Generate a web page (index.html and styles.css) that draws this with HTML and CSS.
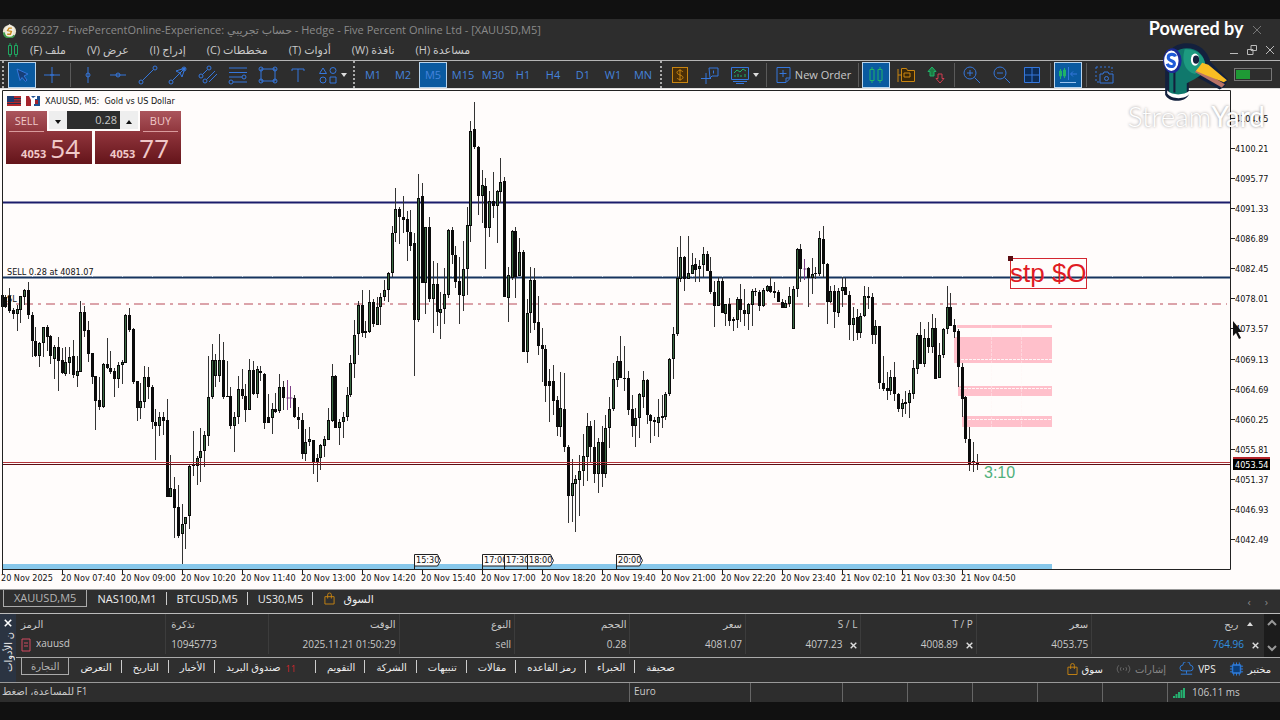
FILE: index.html
```html
<!DOCTYPE html>
<html lang="ar">
<head>
    <meta charset="UTF-8">
    <meta name="viewport" content="width=device-width, initial-scale=1.0">
    <title>XAUUSD,M5</title>
    <link rel="stylesheet" href="styles.css">
</head>
<body>
    <header>
        <div class="title-bar">
            <svg class="app-logo" viewBox="0 0 16 16"><circle cx="8" cy="9" r="7" fill="#e9e4d0"/><path d="M2 10a6 6 0 0 0 11 3" fill="none" stroke="#3f9a4c" stroke-width="2"/><path d="M8 1l5 4-2 9H5L3 6z" fill="#f3efe2"/><path d="M10.500 5.500H7.500L6 8l4 1-1 3H5.500" fill="none" stroke="#c98a1c" stroke-width="1.500"/></svg>
            <h1 class="window-title">669227 - FivePercentOnline-Experience: حساب تجريبي - Hedge - Five Percent Online Ltd - [XAUUSD,M5]</h1>
            <button class="close-btn" aria-label="Close"><svg viewBox="0 0 10 10"><path d="M1 1l8 8M9 1l-8 8"/></svg></button>
        </div>
        <nav class="menu-bar">
            <svg class="menu-icon" viewBox="0 0 12 14"><path d="M3 0v2M3 12v2M9 0v2M9 12v2M1.500 2.500h3v9h-3zM7.500 2.500h3v9h-3z"/></svg>
            <a href="#" dir="rtl">ملف (F)</a>
            <a href="#" dir="rtl">عرض (V)</a>
            <a href="#" dir="rtl">إدراج (I)</a>
            <a href="#" dir="rtl">مخططات (C)</a>
            <a href="#" dir="rtl">أدوات (T)</a>
            <a href="#" dir="rtl">نافذة (W)</a>
            <a href="#" dir="rtl">مساعدة (H)</a>
            <div class="window-btns">
                <button aria-label="Minimize"><svg viewBox="0 0 10 10"><path d="M1 8.500h8"/></svg></button>
                <button aria-label="Restore"><svg viewBox="0 0 10 10"><path d="M4 .5h5.500v5H4zM.5 4.500H6v5H.5z"/></svg></button>
                <button aria-label="Close chart"><svg viewBox="0 0 10 10"><path d="M1 1l8 8M9 1l-8 8"/></svg></button>
            </div>
        </nav>
        <div class="toolbar">
            <span class="handle"></span>
            <button class="tool active" aria-label="Cursor"><svg viewBox="0 0 20 20"><path d="M5 4l11 5-4 2 3 4-1.500 1.500-3.500-4-2 3z" fill="#173f78"/></svg></button>
            <button class="tool" aria-label="Crosshair"><svg viewBox="0 0 20 20"><path d="M10 2v16M2 10h16M8 10h4"/></svg></button>
            <span class="sep"></span>
            <button class="tool" aria-label="Vertical line"><svg viewBox="0 0 20 20"><path d="M10 2v16"/><circle cx="10" cy="10" r="2"/></svg></button>
            <button class="tool" aria-label="Horizontal line"><svg viewBox="0 0 20 20"><path d="M2 10h16"/><circle cx="10" cy="10" r="2"/></svg></button>
            <button class="tool" aria-label="Trend line"><svg viewBox="0 0 20 20"><path d="M4.500 15.500l11-11"/><circle cx="3" cy="17" r="2"/><circle cx="17" cy="3" r="2"/></svg></button>
            <button class="tool" aria-label="Arrow line"><svg viewBox="0 0 20 20"><path d="M4.500 15.500L17 3M8 6l9-3-3 9-2-4z"/><circle cx="3" cy="17" r="2"/><circle cx="16" cy="4" r="2"/></svg></button>
            <button class="tool" aria-label="Channel"><svg viewBox="0 0 20 20"><path d="M4.500 9.500l5-5M8.500 14.500L17 6M11 17l8-8"/><circle cx="11" cy="3" r="2"/><circle cx="3" cy="11" r="2"/><circle cx="7" cy="16" r="2"/></svg></button>
            <button class="tool" aria-label="Fibonacci"><svg viewBox="0 0 20 20"><path d="M1 3h18M1 7.500h18M1 12h13M5 17h14"/><circle cx="16" cy="12" r="2"/><circle cx="3" cy="17" r="2"/></svg></button>
            <button class="tool" aria-label="Rectangle"><svg viewBox="0 0 20 20"><path d="M3 4h14v12H3z"/><circle cx="3" cy="4" r="2"/><circle cx="17" cy="4" r="2"/><circle cx="3" cy="16" r="2"/><circle cx="17" cy="16" r="2"/></svg></button>
            <button class="tool" aria-label="Text"><svg viewBox="0 0 20 20"><path d="M4 6V4h12v2M10 4v13"/></svg></button>
            <button class="tool wide" aria-label="Shapes"><svg viewBox="0 0 20 20"><path d="M5 3l3.500 5.500h-7zM12 12h6v6h-6z"/><circle cx="15" cy="5.500" r="3"/><circle cx="5" cy="15" r="3"/></svg><i class="caret"></i></button>
            <span class="handle"></span>
            <button class="tool">M1</button>
            <button class="tool">M2</button>
            <button class="tool active">M5</button>
            <button class="tool">M15</button>
            <button class="tool">M30</button>
            <button class="tool">H1</button>
            <button class="tool">H4</button>
            <button class="tool">D1</button>
            <button class="tool">W1</button>
            <button class="tool">MN</button>
            <span class="handle"></span>
            <button class="tool gold" aria-label="Market depth"><svg viewBox="0 0 20 20"><rect x="2.500" y="2.500" width="15" height="15" fill="#4b2f06"/><path d="M13 7c-1-2-6-2-6 .5S13 10 13 12.500s-5 2.500-6 .5M10 4v12"/></svg></button>
            <button class="tool" aria-label="Data window"><svg viewBox="0 0 20 20"><path d="M6 8v11M1 13.500h10M9 3h9v8h-6l-2 2zM13.500 5.500v3"/></svg></button>
            <button class="tool wide" aria-label="Indicators"><svg viewBox="0 0 20 20"><path d="M1.500 2.500h17v12h-17zM3 16.500h14M6 18.500h8"/><path class="green" d="M4 8l3-3 3 2 3-3 3 2M5 12v-2M8 12V9M11 12v-2M15 12V9"/></svg><i class="caret"></i></button>
            <span class="sep"></span>
            <button class="tool order"><svg viewBox="0 0 20 20"><path d="M4 2.500h13v11l-4 4H4zM13 17v-4h4M10 5v7M6.500 8.500h7"/></svg>New Order</button>
            <span class="sep"></span>
            <button class="tool active" aria-label="Candles"><svg class="green" viewBox="0 0 20 20"><path d="M6 2v2M6 16v2M14 2v2M14 16v2M4 4.500h4v11H4zM12 4.500h4v11h-4z"/></svg></button>
            <button class="tool gold" aria-label="Templates"><svg viewBox="0 0 20 20"><path d="M2 4v13M2 10h3M5.500 3.500h5l1 2h7v11h-13zM8 8h6v4H8z" fill="#3a2708"/></svg></button>
            <button class="tool" aria-label="Buy and sell"><svg viewBox="0 0 20 20"><path class="green" d="M6 2l4 4.500H8V11H4V6.500H2z" fill="#1c7a42"/><path class="red" d="M14 18l-4-4.500h2V9h4v4.500h2z"/></svg></button>
            <span class="sep"></span>
            <button class="tool" aria-label="Zoom in"><svg viewBox="0 0 20 20"><circle cx="8" cy="8" r="6"/><path d="M12.500 12.500L18 18M5 8h6M8 5v6"/></svg></button>
            <button class="tool" aria-label="Zoom out"><svg viewBox="0 0 20 20"><circle cx="8" cy="8" r="6"/><path d="M12.500 12.500L18 18M5 8h6"/></svg></button>
            <button class="tool" aria-label="Tile windows"><svg viewBox="0 0 20 20"><path d="M2.500 2.500h15v15h-15zM10 2.500v15M2.500 10h15" fill="#0c2c57"/></svg></button>
            <span class="sep"></span>
            <button class="tool active" aria-label="Chart shift"><svg viewBox="0 0 20 20"><path class="green" d="M2.500 4v10M6.500 3v10M1.500 6h2v5h-2zM5.500 5h2v6h-2z"/><path d="M10.500 2v13M19 9h-6M15 6.500L12.500 9l2.500 2.500"/><path class="pale" d="M2 17.500h16"/></svg></button>
            <span class="sep"></span>
            <button class="tool" aria-label="Screenshot"><svg viewBox="0 0 20 20"><path d="M2 2h16v5M2 2v15h3" stroke-dasharray="2 2"/><path d="M6 9h3l1-2h4l1 2h4v9H6z"/><circle cx="12.500" cy="13.500" r="2"/></svg></button>
            <div class="toolbar-end">
                <button class="tool light" aria-label="Search"><svg viewBox="0 0 20 20"><circle cx="8" cy="9" r="5"/><path d="M12 13l4 4"/></svg></button>
                <button class="tool" aria-label="Updates"><svg viewBox="0 0 20 20"><path class="green" d="M11 2l4 4h-2v5H9V6H7z"/></svg></button>
                <span class="battery"><i></i></span>
            </div>
        </div>
    </header>

    <main class="chart">
        <svg id="chart" class="chart-svg" viewBox="0 89 1280 500">
            <g class="zones">
                <path d="M957 325h95v3h-95zM954 337h98v26h-98zM958 386h94v10h-94zM962 416h90v11h-90z"/>
                <path class="zone-line" d="M957 359.500h95M960 388.500h92M964 419.500h88"/>
                <path class="zone-line faint" d="M991.500 325v102M1021.500 325v102"/>
            </g>
            <rect class="session" x="2" y="564" width="1050" height="5"/>
            <path class="level" d="M2 202.500h1229"/>
            <path class="level entry" d="M2 277.500h1229"/>
            <path class="level-gap" d="M32 276.500h1199"/>
            <path class="stop" d="M2 304h1225"/>
            <g id="candles"></g>
            <path class="ask" d="M2 462.500h1229"/>
            <path class="bid" d="M2 464.500h1229"/>
            <path class="frame" d="M2.500 569V90.500H1230.500V569.500H2"/>
            <g id="axes"></g>
            <text x="7" y="275">SELL 0.28 at 4081.07</text>
            <text x="7" y="302">SL</text>
            <g class="note">
                <rect x="1010.500" y="258.500" width="76" height="30"/>
                <rect class="anchor" x="1008" y="256" width="5" height="5"/>
                <text x="1010" y="282">stp $O</text>
            </g>
            <text class="timer" x="984" y="478">3:10</text>
            <rect x="1233" y="458" width="37" height="12" fill="#000"/>
            <rect x="1233" y="457" width="37" height="2" fill="#b3242b"/>
            <text class="tag" x="1235" y="468">4053.54</text>
            <path class="pointer" d="M1233 321v15l3-3 3 6 2-1-3-6h4z"/>
        </svg>
        <div class="symbol-line">
            <svg viewBox="0 0 14 10"><path fill="#b3282d" d="M0 0h14v10H0z"/><path d="M0 2.500h14M0 5h14M0 7.500h14" stroke="#24304f"/><path fill="#1e3c72" d="M0 0h7v6H0z"/></svg>
            <svg viewBox="0 0 14 10"><path fill="#1f4f8f" d="M0 0h14v10H0z"/><path fill="#a5232c" d="M0 0h5v10H0zM9 4h3v4H9z"/><path d="M3 0h2l2 2 3-2h1v3H9v5H8v2H5V4z" fill="#fff"/></svg>
            <span>XAUUSD, M5:&nbsp; Gold vs US Dollar</span>
        </div>
        <div class="trade-panel">
            <button class="deal"><span class="side">SELL</span><span class="price"><small>4053</small>54</span></button>
            <button class="deal buy"><span class="side">BUY</span><span class="price"><small>4053</small>77</span></button>
            <div class="volume">
                <button aria-label="Less"><i class="caret dark"></i></button>
                <input type="text" value="0.28" aria-label="Volume">
                <button aria-label="More"><i class="caret dark up"></i></button>
            </div>
        </div>
    </main>

    <nav class="chart-tabs">
        <a class="tab current" href="#">XAUUSD,M5</a>
        <a class="tab" href="#">NAS100,M1</a>
        <a class="tab" href="#">BTCUSD,M5</a>
        <a class="tab" href="#">US30,M5</a>
        <a class="tab market" href="#"><svg class="bag" viewBox="0 0 12 14"><path d="M1 5h10v8H1zM4 7V3a2 2 0 0 1 4 0v4"/></svg>السوق</a>
        <div class="tab-scroll"><button aria-label="Previous">‹</button><button aria-label="Next">›</button></div>
    </nav>

    <section class="toolbox">
        <div class="toolbox-side">
            <button aria-label="Close toolbox"><svg viewBox="0 0 10 10"><path d="M1 1l8 8M9 1l-8 8"/></svg></button>
            <span>ن الأدوات</span>
        </div>
        <div class="toolbox-main">
            <div class="trades-wrap">
                <table class="trades">
                    <colgroup><col class="c-symbol"><col class="c-ticket"><col class="c-time"><col class="c-num"><col class="c-num"><col class="c-num"><col class="c-num"><col class="c-num"><col class="c-num"><col></colgroup>
                    <thead>
                        <tr><th class="start">الرمز</th><th class="start">تذكرة</th><th>الوقت</th><th>النوع</th><th>الحجم</th><th>سعر</th><th>S / L</th><th>T / P</th><th>سعر</th><th>ربح <i class="caret up sort"></i></th></tr>
                    </thead>
                    <tbody>
                        <tr>
                            <td class="start"><svg class="doc" viewBox="0 0 10 14"><path d="M1 1h8v12H1zM3 5h4M3 8h4"/></svg>xauusd</td>
                            <td class="start">10945773</td>
                            <td>2025.11.21 01:50:29</td>
                            <td>sell</td>
                            <td>0.28</td>
                            <td>4081.07</td>
                            <td>4077.23<button aria-label="Remove stop loss"><svg viewBox="0 0 10 10"><path d="M1 1l8 8M9 1l-8 8"/></svg></button></td>
                            <td>4008.89<button aria-label="Remove take profit"><svg viewBox="0 0 10 10"><path d="M1 1l8 8M9 1l-8 8"/></svg></button></td>
                            <td>4053.75</td>
                            <td class="profit">764.96<button aria-label="Close position"><svg viewBox="0 0 10 10"><path d="M1 1l8 8M9 1l-8 8"/></svg></button></td>
                        </tr>
                    </tbody>
                </table>
                <div class="scroll">
                    <button aria-label="Up"><svg viewBox="0 0 10 10"><path d="M1 7l4-4 4 4"/></svg></button>
                    <button aria-label="Down"><svg viewBox="0 0 10 10"><path d="M1 3l4 4 4-4"/></svg></button>
                </div>
            </div>
            <nav class="toolbox-tabs">
                <a class="tab current" href="#">التجارة</a>
                <a class="tab" href="#">التعرض</a>
                <a class="tab" href="#">التاريخ</a>
                <a class="tab" href="#">الأخبار</a>
                <a class="tab" href="#">صندوق البريد<sub>11</sub></a>
                <a class="tab" href="#">التقويم</a>
                <a class="tab" href="#">الشركة</a>
                <a class="tab" href="#">تنبيهات</a>
                <a class="tab" href="#">مقالات</a>
                <a class="tab" href="#">رمز القاعده</a>
                <a class="tab" href="#">الخبراء</a>
                <a class="tab" href="#">صحيفة</a>
                <div class="services">
                    <a href="#"><svg class="bag" viewBox="0 0 12 14"><path d="M1 5h10v8H1zM4 7V3a2 2 0 0 1 4 0v4"/></svg>سوق</a>
                    <a class="off" href="#"><svg viewBox="0 0 16 12"><path d="M3 2a6 6 0 0 0 0 8M5.500 4a3 3 0 0 0 0 4M10.500 4a3 3 0 0 1 0 4M13 2a6 6 0 0 1 0 8M8 5v2"/></svg>إشارات</a>
                    <a href="#"><svg viewBox="0 0 16 14"><path d="M4 9a3 3 0 0 1 0-6 4 4 0 0 1 8 0 3 3 0 0 1 0 6zM8 9v3M2 12.500h12"/></svg>VPS</a>
                    <a href="#"><svg viewBox="0 0 16 14"><path d="M3.500 2.500h9v9h-9zM5 0v14M8 0v14M11 0v14M1 4h14M1 7h14M1 10h14"/><path d="M4 3h8v8H4z" fill="#0b3f7c"/></svg>مختبر</a>
                </div>
            </nav>
        </div>
    </section>

    <footer class="status-bar">
        <span class="help" dir="rtl">F1 للمساعدة، اضغط</span>
        <span class="s-profile">Euro</span>
        <span class="s-wide"></span>
        <span></span>
        <span></span>
        <span></span>
        <span></span>
        <span></span>
        <span class="ping"><svg viewBox="0 0 12 10"><path d="M1 10V8M3.500 10V6M6 10V4M8.500 10V2M11 10V0"/></svg>106.11 ms</span>
    </footer>

    <div class="powered">
        <span class="by">Powered by</span>
        <svg viewBox="0 0 68 60">
            <path d="M5 52V22C5 8 16 2 26 2c12 0 20 7 23 18l17 17-3 7-5 3-24-13-6 4v14c-4 8-19 8-23 0z" fill="#13203d"/>
            <path d="M9 50V24C9 12 18 7 26 7c10 0 18 7 18 17 0 8-8 12-18 17v9c-3 4-13 4-17 0z" fill="#10786c"/>
            <path d="M24 8c12-1 20 7 20 17l-10 7c-8-2-14-10-10-24z" fill="#1d9a80"/>
            <path d="M14 20v30" stroke="#13203d" stroke-width="2"/>
            <path d="M7 48c5 5 16 5 22 0v3c-4 6-18 6-22 0z" fill="#fff"/>
            <path d="M34 30l26 15 3-3-26-16z" fill="#b97265"/>
            <path d="M35 29l6-8 6 2 18 15-3 2-18-7z" fill="#f9bd23"/>
            <ellipse cx="34" cy="18" rx="4" ry="6" fill="#fff"/><ellipse cx="35" cy="18" rx="3" ry="4" fill="#13203d"/>
            <ellipse cx="12" cy="19" rx="9" ry="12" fill="#1c2b96"/>
            <ellipse cx="11" cy="19" rx="7" ry="10" fill="#fff"/>
            <path d="M15 15c-1-3-7-3-7 1s6 2 6 6-6 3-7 0" fill="none" stroke="#1f5bd8" stroke-width="3"/>
        </svg>
        <span class="brand">Stream<b>Yard</b></span>
    </div>

    <script src="chart.js"></script>
</body>
</html>
```

FILE: styles.css
```css
* {
    box-sizing: border-box;
}

body {
    margin: 0;
    padding: 19px 0;
    min-height: 100vh;
    position: relative;
    background-color: #111;
    color: #c9c9c9;
    font-family: "Open Sans", "DejaVu Sans", sans-serif;
    font-size: 10px;
    line-height: 14px;
    overflow: hidden;
}

button {
    padding: 0;
    border: none;
    background: none;
    color: inherit;
    font: inherit;
    cursor: pointer;
}

a {
    color: inherit;
    text-decoration: none;
}

svg {
    fill: none;
    stroke: none;
}

header {
    background-color: #2d2d2d;
}

.title-bar {
    display: flex;
    align-items: center;
    height: 22px;
    padding: 0 18px 0 2px;
    gap: 4px;
}

.app-logo {
    width: 15px;
    height: 15px;
}

.window-title {
    margin: 0;
    flex: 1;
    color: #8a8a8a;
    font-size: 11px;
    font-weight: normal;
}

.close-btn svg,
.window-btns svg {
    display: block;
    width: 10px;
    height: 10px;
    stroke: #bbb;
}

.close-btn svg {
    stroke: #777;
}

.menu-bar {
    display: flex;
    align-items: center;
    height: 19px;
    padding: 0 5px 2px 7px;
    gap: 21px;
    font-size: 11px;
}

.menu-icon {
    width: 12px;
    height: 14px;
    margin-right: -10px;
    stroke: #1fa862;
}

.window-btns {
    margin-left: auto;
    display: flex;
    gap: 8px;
}

.toolbar {
    display: flex;
    align-items: center;
    height: 29px;
    padding: 0 8px 0 1px;
    border-top: 1px solid #b5b5b5;
    border-bottom: 1px solid #ddd;
}

.handle {
    align-self: stretch;
    margin: 0 4px 0 1px;
    border-left: 2px dotted #aaa;
}

.sep {
    width: 1px;
    height: 24px;
    margin: 0 3px 0 2px;
    background-color: #5a5a5a;
}

.tool {
    display: flex;
    align-items: center;
    justify-content: center;
    width: 28px;
    height: 26px;
    margin-right: 2px;
    border: 1px solid transparent;
    color: #4583dc;
    font-size: 11px;
}

.tool svg {
    flex: none;
    width: 20px;
    height: 20px;
    stroke: #3577dc;
}

.tool.active {
    background-color: #0a5aa0;
    border-color: #b9d4ec;
}

.tool.wide {
    width: 36px;
    gap: 3px;
}

.tool.order {
    width: 84px;
    gap: 2px;
    color: #c9c9c9;
}

.tool.gold svg {
    stroke: #c98511;
}

.tool.light svg {
    stroke: #ccc;
}

.tool .green {
    stroke: #1fb268;
}

.tool .pale {
    stroke: #9cc4f0;
}

.tool .red {
    stroke: #d23c50;
}

.caret {
    display: inline-block;
    border: 3px solid transparent;
    border-top: 4px solid #ddd;
    border-bottom: none;
}

.caret.up {
    border-top: none;
    border-bottom: 4px solid #ddd;
}

.caret.dark {
    border-top-color: #111;
    border-bottom-color: #111;
}

.toolbar-end {
    display: flex;
    align-items: center;
    margin-left: auto;
}

.toolbar-end .tool {
    margin-right: 6px;
}

.battery {
    width: 38px;
    height: 13px;
    padding: 1px;
    border: 1px solid #777;
}

.battery i {
    display: block;
    width: 40%;
    height: 100%;
    background-color: #1f9a35;
}

/* chart */
.chart {
    position: relative;
    background-color: #fffcfb;
}

.chart-svg {
    display: block;
    width: 100%;
}

.chart-svg text {
    fill: #111;
    font-family: "DejaVu Sans Condensed", "DejaVu Sans", sans-serif;
    font-size: 9px;
}

.zones {
    fill: #ffc0cb;
}

.zone-line {
    stroke: #fff5f6;
    stroke-dasharray: 3 1;
}

.zone-line.faint {
    opacity: 0.4;
}

.session {
    fill: #87c7ea;
}

.level {
    stroke: #1b1c6b;
    stroke-width: 2;
}

.level.entry {
    stroke: #16345f;
}

.level-gap {
    stroke: #c9d8e8;
    stroke-dasharray: 1 29;
}

.stop {
    stroke: #b84a58;
    stroke-dasharray: 9 5 3 5;
}

.wick {
    stroke: #333;
}

.wick.doji {
    stroke: #7d3f86;
}

.body {
    stroke: #0b0b0b;
    stroke-width: 3;
}

.fill {
    stroke: #3a6a42;
}

.ask {
    stroke: #b3343a;
}

.bid {
    stroke: #5e0d14;
}

.frame,
.tick {
    stroke: #222;
}

.flag {
    fill: #fffcfb;
    stroke: #222;
}

.note {
    stroke: #d32630;
}

.chart-svg .note text {
    fill: #e01b24;
    stroke: none;
    font-family: "Liberation Sans", sans-serif;
    font-size: 26px;
}

.anchor {
    fill: #5a0d12;
    stroke: none;
}

.chart-svg .timer {
    fill: #4fb07c;
    font-family: "Liberation Sans", sans-serif;
    font-size: 16px;
}

.chart-svg .tag {
    fill: #fff;
}

.pointer {
    fill: #111;
}

.symbol-line {
    position: absolute;
    top: 5px;
    left: 7px;
    display: flex;
    align-items: center;
    gap: 5px;
    color: #111;
    font-family: "DejaVu Sans Condensed", "DejaVu Sans", sans-serif;
    font-size: 9px;
}

.symbol-line svg {
    width: 14px;
    height: 10px;
}

.trade-panel {
    position: absolute;
    top: 22px;
    left: 6px;
    display: flex;
    gap: 3px;
}

.deal {
    display: flex;
    flex-direction: column;
    width: 86px;
    height: 53px;
    background: linear-gradient(#ab565d, #8c3239 45%, #64141a);
    color: #f0c9c9;
}

.side {
    width: 35px;
    height: 21px;
    margin-left: 3px;
    border-bottom: 1px solid #d99a9c;
    font-size: 11px;
    line-height: 20px;
}

.deal.buy .side {
    align-self: flex-end;
    margin-right: 3px;
}

.price {
    align-self: flex-end;
    padding-right: 12px;
    font-size: 26px;
    line-height: 32px;
}

.price small {
    margin-right: 4px;
    font-size: 11px;
    font-weight: bold;
}

.volume {
    position: absolute;
    top: 0;
    left: 41px;
    display: flex;
    width: 93px;
    height: 20px;
    padding: 0 2px 2px;
    background-color: #fffcfb;
}

.volume button {
    width: 18px;
    background-color: #eee;
    line-height: 8px;
}

.volume input {
    flex: 1;
    min-width: 0;
    padding: 0 3px;
    border: none;
    background-color: #2d2d2d;
    color: #c9c9c9;
    font: inherit;
    font-size: 11px;
    text-align: right;
}

/* tabs */
.chart-tabs,
.toolbox-tabs {
    display: flex;
    height: 24px;
    background-color: #2f2f2f;
    color: #eee;
}

.chart-tabs {
    padding-left: 3px;
    border-top: 1px solid #999;
    font-size: 11px;
}

.tab {
    display: flex;
    align-items: center;
    height: 17px;
    padding: 0 10px;
    white-space: nowrap;
}

.tab:not(.current):not(:last-of-type) {
    background: linear-gradient(#ccc, #ccc) right center / 1px 13px no-repeat;
}

.tab.current {
    border: 1px solid #aaa;
    border-top: none;
    color: #b5b5b5;
}

.bag {
    width: 11px;
    height: 13px;
    margin-right: 8px;
    stroke: #c98511;
}

.market {
    padding-left: 11px;
}

.tab-scroll {
    display: flex;
    gap: 14px;
    margin-left: auto;
    padding-right: 12px;
    color: #888;
}

.toolbox {
    display: flex;
    border-top: 1px solid #bbb;
    border-bottom: 1px solid #999;
    background-color: #2d2d2d;
}

.toolbox-side {
    display: flex;
    flex-direction: column;
    align-items: center;
    width: 16px;
    padding-top: 5px;
    gap: 5px;
    background-color: #2b3442;
}

.toolbox-side svg {
    display: block;
    width: 8px;
    height: 8px;
    stroke: #fff;
    stroke-width: 2;
}

.toolbox-side span {
    writing-mode: vertical-rl;
    transform: rotate(180deg);
    white-space: nowrap;
    color: #eee;
}

.toolbox-main {
    flex: 1;
    min-width: 0;
}

.trades-wrap {
    display: flex;
    border-bottom: 1px solid #aaa;
}

.trades {
    flex: 1;
    table-layout: fixed;
    width: 100%;
    margin-bottom: 3px;
    border-collapse: collapse;
}

.c-symbol {
    width: 12%;
}

.c-ticket {
    width: 8.2%;
}

.c-time {
    width: 10.5%;
}

.c-num {
    width: 9.25%;
}

.trades th,
.trades td {
    height: 20px;
    padding: 0 3px;
    border-right: 1px solid #3c3c3c;
    font-weight: normal;
    font-size: 10px;
    text-align: right;
    white-space: nowrap;
}

.trades th:last-child,
.trades td:last-child {
    border-right: none;
    padding-right: 5px;
}

.trades .start {
    padding-left: 5px;
    text-align: left;
}

.trades td button {
    margin-left: 8px;
    vertical-align: middle;
}

.trades td button svg {
    display: block;
    width: 7px;
    height: 7px;
    stroke: #ddd;
    stroke-width: 2;
}

.doc {
    width: 10px;
    height: 14px;
    margin-right: 5px;
    vertical-align: middle;
    stroke: #d04a60;
}

.trades .profit {
    color: #3191e0;
}

.sort {
    margin: 0 6px 2px;
}

.scroll {
    display: flex;
    flex-direction: column;
    justify-content: space-between;
    width: 16px;
    padding: 4px 3px;
    background-color: #1c1c1c;
}

.scroll svg {
    display: block;
    width: 10px;
    height: 10px;
    stroke: #999;
    stroke-width: 2;
}

.toolbox-tabs {
    padding-left: 5px;
}

.toolbox-tabs .tab {
    padding: 0 10px 0 11px;
}

.toolbox-tabs .tab.current {
    padding: 0 9px;
}

.toolbox-tabs sub {
    padding: 5px 10px 0 5px;
    color: #d2262c;
    font-size: 9px;
}

.services {
    display: flex;
    align-items: center;
    gap: 13px;
    margin-left: auto;
    padding: 0 9px 2px 0;
}

.services a {
    display: flex;
    align-items: center;
    gap: 4px;
}

.services svg {
    width: 15px;
    height: 14px;
    margin: 0;
    stroke: #2f7fe0;
}

.services .bag {
    width: 11px;
    stroke: #c98511;
}

.services .off {
    color: #888;
}

.services .off svg {
    stroke: #666;
}

.status-bar {
    display: flex;
    height: 19px;
    background-color: #2d2d2d;
}

.status-bar span {
    width: 65px;
    border-left: 1px solid #666;
    line-height: 17px;
}

.status-bar .help {
    flex: 1;
    padding: 0 2px;
    border: none;
    text-align: left;
}

.status-bar .s-profile {
    width: 121px;
    padding-left: 4px;
}

.status-bar .s-wide {
    width: 92px;
}

.status-bar .ping {
    display: flex;
    align-items: center;
    gap: 7px;
    width: 113px;
    padding-left: 5px;
}

.ping svg {
    width: 12px;
    height: 10px;
    stroke: #25b070;
    stroke-width: 2;
}

/* stream watermark */
.powered {
    position: absolute;
    top: 15px;
    right: 15px;
    display: flex;
    flex-direction: column;
    color: #fff;
    font-family: Lato, sans-serif;
    pointer-events: none;
}

.powered .by {
    padding-left: 21px;
    font-size: 18px;
    font-weight: 700;
    line-height: 26px;
}

.powered svg {
    width: 70px;
    height: 62px;
    margin-left: 32px;
}

.powered .brand {
    font-size: 28px;
    font-weight: 300;
    line-height: 27px;
    text-shadow: 0 0 3px rgba(0, 0, 0, 0.45);
}
```

FILE: chart.js
```js
// high, body top, body bottom, low, kind (u = up, d = down, x = doji)
const bars = `292 295 307 307 u|295 297 307 308 d|288 296 311 313 d|308 310 314 319 d|305 309 314 331 u|296 296 310 323 u|289 290 297 305 u|282 290 315 319 d
312 315 341 357 d|327 341 356 357 d|342 343 356 367 u|327 327 343 357 u|325 327 337 351 d|335 336 356 364 d|345 347 359 379 u|337 347 361 391 d
348 360 373 374 d|347 362 374 376 u|347 357 363 374 u|340 356 375 378 d|356 371 376 387 u|301 312 372 372 u|306 312 331 337 d|321 330 354 362 d
353 353 377 384 d|376 376 401 430 d|377 400 407 410 d|363 364 407 408 u|338 364 368 369 d|351 368 372 374 d|368 371 379 397 d|362 365 379 388 u
360 362 365 384 u|314 315 363 363 u|308 315 330 332 d|328 329 382 384 d|381 381 408 421 d|383 401 408 419 u|366 377 402 408 u|367 377 387 399 d
385 387 422 429 d|409 422 426 460 d|412 417 426 436 u|412 417 421 435 d|399 420 497 497 d|455 488 497 497 u|477 489 508 538 d|485 507 536 538 d
504 524 534 564 u|517 517 524 549 u|465 466 516 529 u|431 464 466 476 d|456 458 466 485 u|428 451 458 482 u|431 435 451 467 u|356 397 436 446 u
344 360 397 399 u|354 360 376 387 u|334 360 376 382 u|342 360 397 399 d|361 396 397 397 d|387 396 426 429 d|412 417 426 452 u|376 389 417 424 u
369 389 396 399 d|384 396 410 422 d|359 370 410 410 u|361 370 394 395 d|366 369 394 398 u|366 371 373 381 d|373 374 423 429 d|394 417 423 423 d
403 409 418 434 u|393 409 412 413 d|374 387 411 413 u|381 387 398 410 d|380 397 398 410 x|386 397 398 408 x|395 398 417 418 d|407 417 420 429 d
413 420 454 459 d|429 442 454 461 u|427 439 442 446 u|440 440 462 474 d|454 458 462 482 d|444 445 458 470 u|436 439 446 457 u|408 420 440 440 u
364 376 421 422 u|375 376 428 428 d|419 422 428 445 u|412 417 422 438 u|387 395 417 421 u|355 363 395 397 u|320 335 364 378 u|301 305 334 355 u
290 305 333 337 d|321 331 333 338 u|290 302 332 333 u|299 302 324 327 d|297 307 325 325 u|293 297 307 325 u|280 290 297 301 u|272 273 290 302 u
226 233 273 277 u|188 209 233 242 u|207 209 217 244 d|196 217 220 233 d|211 219 232 261 d|210 232 246 251 d|233 243 320 376 d|174 198 320 322 u
183 196 283 283 d|227 227 283 314 u|217 227 299 302 d|261 284 299 333 u|263 284 312 326 d|292 309 313 339 u|268 294 309 324 u|229 230 295 298 u
227 230 255 264 d|246 255 282 288 d|257 281 295 324 d|241 269 296 311 u|207 225 269 295 u|121 131 226 242 u|102 129 147 149 d|146 147 196 215 d
170 185 196 223 u|178 186 228 269 d|191 201 228 237 u|172 201 206 218 d|190 191 206 243 u|158 182 192 203 u|177 181 297 297 d|267 275 298 322 u
230 231 278 280 u|227 231 277 298 d|238 252 276 276 u|250 252 352 352 d|299 313 352 363 u|267 280 313 333 u|268 280 323 330 d|296 322 346 355 d
328 345 349 382 d|345 349 386 402 d|369 381 386 422 d|365 381 401 415 d|396 400 427 436 d|372 408 427 437 u|373 409 447 452 d|445 447 496 523 d
459 483 496 522 u|475 479 484 532 u|455 471 480 516 u|434 456 471 486 u|413 426 457 481 u|421 426 447 462 d|420 447 474 483 d|438 442 474 493 u
426 442 474 487 d|415 428 474 478 u|397 409 428 448 u|363 379 409 411 u|356 361 380 387 u|336 361 378 378 d|346 378 379 391 d|371 378 410 415 d
395 409 426 437 d|408 418 426 447 u|393 394 418 438 u|371 380 397 408 u|379 380 415 424 d|414 415 421 443 d|417 420 422 436 d|399 417 423 437 u
395 416 418 428 d|392 394 417 420 u|358 359 394 396 u|327 334 359 379 u|247 278 334 336 u|236 257 279 282 u|256 257 279 291 d|236 273 279 279 u
253 265 274 274 u|258 264 270 282 d|260 266 269 282 u|247 254 265 277 u|251 254 271 271 d|257 271 292 294 d|281 292 306 327 d|277 281 306 306 u
278 281 313 313 d|304 304 314 326 u|298 304 321 326 d|317 319 321 331 u|297 299 320 328 u|284 299 310 322 d|289 310 314 326 d|303 304 314 330 u
289 291 305 326 u|288 291 292 296 d|290 292 306 311 d|288 290 306 307 u|285 286 291 292 u|277 286 292 293 d|282 291 293 298 d|290 292 302 302 d
299 302 308 308 d|300 303 308 308 u|287 296 304 307 u|286 289 329 329 u|248 249 289 297 u|244 249 269 282 d|259 268 269 280 x|267 268 278 307 d
258 274 278 294 u|267 273 274 279 d|231 238 274 276 u|226 239 264 278 d|263 264 302 324 d|286 291 302 303 u|285 291 312 328 d|288 291 313 317 u
277 287 291 307 u|278 287 295 295 d|291 295 325 340 d|307 318 325 341 u|309 317 333 340 d|313 316 333 338 u|286 296 316 317 u|287 296 298 309 d
293 297 335 344 d|320 326 335 344 u|326 326 383 389 d|356 383 389 391 d|372 388 391 400 d|370 377 391 395 u|362 377 394 401 d|393 394 409 412 d
399 403 409 417 u|391 402 404 414 d|390 393 403 418 u|360 368 394 399 u|333 335 369 374 u|322 335 364 364 d|329 338 364 367 u|322 338 347 353 d
314 328 347 353 u|318 328 379 379 d|343 355 378 378 u|328 329 355 358 u|286 307 329 334 u|293 307 326 326 d|319 325 332 338 d|329 331 367 387 d
363 367 399 417 d|396 397 439 443 d|427 439 464 471 d|442 461 462 472 d|454 463 464 470 d`.split(/[|\n]/);

const times = ['20 Nov 2025', '20 Nov 07:40', '20 Nov 09:00', '20 Nov 10:20', '20 Nov 11:40', '20 Nov 13:00',
    '20 Nov 14:20', '20 Nov 15:40', '20 Nov 17:00', '20 Nov 18:20', '20 Nov 19:40', '20 Nov 21:00',
    '20 Nov 22:20', '20 Nov 23:40', '21 Nov 02:10', '21 Nov 03:30', '21 Nov 04:50'];

const events = [[414, '15:30'], [482, '17:00'], [504, '17:30'], [527, '18:00'], [616, '20:00']];

const step = 3.75;
let wicks = '', dojis = '', bodies = '', fills = '';

bars.forEach(function(bar, i) {
    const [high, top, bottom, low, kind] = bar.split(' ');
    const x = Math.floor(2 + i * step) + 0.5;
    const line = `M${x} ${high}V${Math.max(low, +high + 1)}`;
    if (kind === 'x') {
        dojis += line + `M${x - 1} ${bottom}h3`;
        return;
    }
    wicks += line;
    bodies += `M${x} ${top}V${Math.max(bottom, +top + 1)}`;
    if (kind === 'u' && bottom - top > 2) {
        fills += `M${x} ${+top + 1}V${bottom - 1}`;
    }
});

document.getElementById('candles').innerHTML =
    `<path class="wick" d="${wicks}"/><path class="wick doji" d="${dojis}"/>` +
    `<path class="body" d="${bodies}"/><path class="fill" d="${fills}"/>`;

let axes = '';

times.forEach(function(time, i) {
    const x = 2 + i * 60;
    axes += `<path class="tick" d="M${x + 0.5} 569v5"/><text x="${x - 1}" y="581">${time}</text>`;
});

for (let i = 0; i < 15; i++) {
    const y = Math.round(118 + i * 30.07);
    const price = (4104.65 - i * 4.44).toFixed(2);
    axes += `<path class="tick" d="M1231 ${y + 0.5}h4"/><text x="1235" y="${y + 4}">${price}</text>`;
}

events.forEach(function([x, time]) {
    axes += `<path class="flag" d="M${x + 0.5} 569V554.5h23l3 6-3 5.500h-23"/><text x="${x + 2}" y="563">${time}</text>`;
});

document.getElementById('axes').innerHTML = axes;
```
